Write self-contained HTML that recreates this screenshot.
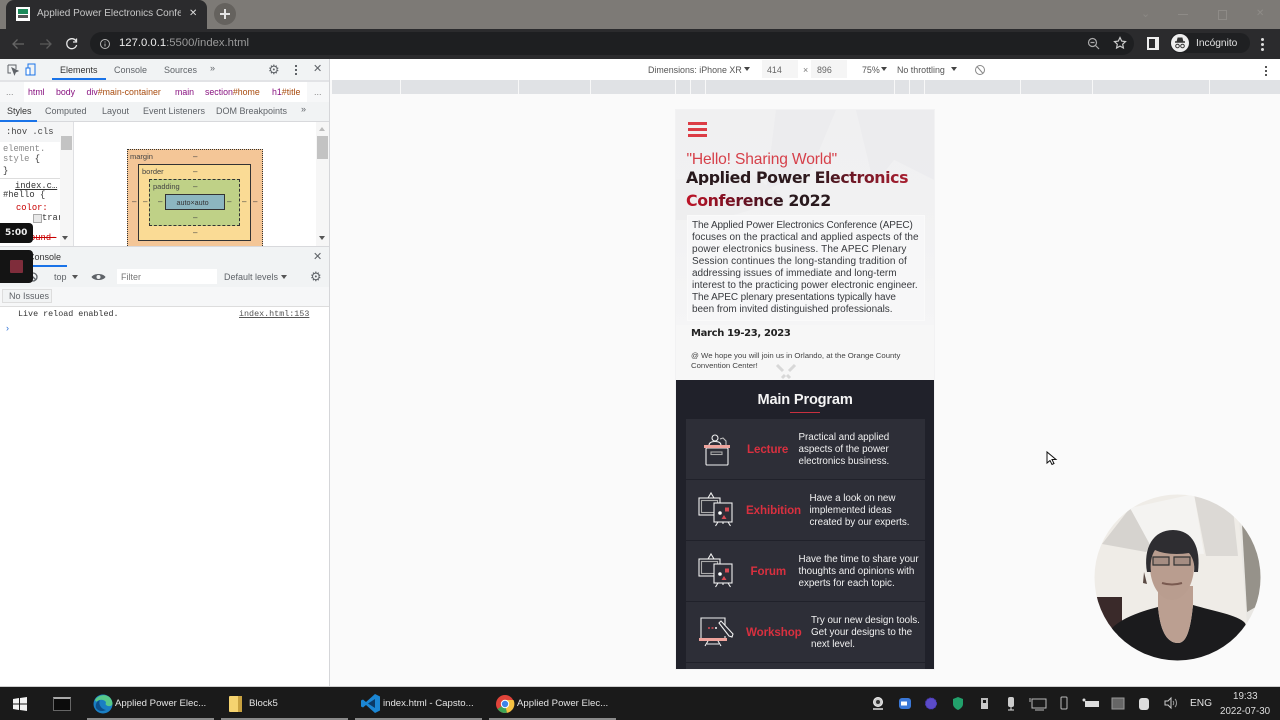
<!DOCTYPE html>
<html lang="en"><head><meta charset="utf-8"><title>Applied Power Electronics Conference</title>
<style>
html,body{margin:0;padding:0;width:1280px;height:720px;overflow:hidden;background:#fafafa;font-family:"Liberation Sans",sans-serif}
.a,.t{position:absolute}
.t{white-space:nowrap;line-height:1}
.m{font-family:"Liberation Mono",monospace}
.b{color:#5f6368;font-size:9px}
.w{color:#f1f1f1;font-size:9.850px;line-height:12px;letter-spacing:-.03px}
.r{color:#d8303f;font-size:11.600px;font-weight:bold;letter-spacing:-.1px}
.p{color:#383a3e;font-size:10px}
svg{position:absolute;overflow:visible}
</style></head><body>

<!-- browser chrome -->
<div class="a" style="left:0;top:0;width:1280px;height:29px;background:#7d7a76"></div>
<div class="a" style="left:6px;top:0;width:201px;height:29px;background:#2b2b2d;border-radius:8px 8px 0 0"></div>
<div class="a" style="left:16px;top:7px;width:14px;height:14px;background:#fff"></div>
<div class="a" style="left:18px;top:9px;width:10px;height:5px;background:#1c8a5a"></div>
<div class="a" style="left:18px;top:15px;width:10px;height:3px;background:#555"></div>
<div class="t" style="left:37px;top:8.500px;font-size:10px;color:#c8c8c8;width:144px;overflow:hidden">Applied Power Electronics Confere</div>
<div class="t" style="left:189px;top:8.500px;font-size:10px;color:#ddd">✕</div>
<div class="a" style="left:214px;top:3px;width:22px;height:22px;border-radius:50%;background:#65625e"></div>
<div class="a" style="left:220px;top:13px;width:10px;height:2px;background:#e4e4e4"></div>
<div class="a" style="left:224px;top:9px;width:2px;height:10px;background:#e4e4e4"></div>
<div class="a" style="left:0;top:29px;width:1280px;height:30px;background:#2b2b2d"></div>
<div class="a" style="left:90px;top:32px;width:1044px;height:23px;border-radius:12px;background:#1e1f21"></div>
<svg style="left:0;top:29px" width="90" height="30" fill="none" stroke-width="1.300">
<path d="M24 15H13M17.500 10.500L13 15l4.500 4.500" stroke="#666"/>
<path d="M40 15h11M46.500 10.500L51 15l-4.500 4.500" stroke="#5a5a5a"/>
<path d="M76 12a5 5 0 1 0 .6 4M76.500 9.500v3.500h-3.500" stroke="#e8e8e8"/>
</svg>
<svg style="left:98px;top:37px" width="14" height="14" fill="none" stroke="#b8b8b8"><circle cx="7" cy="7" r="4.500"/><path d="M7 6.500v3M7 4.500v1"/></svg>
<div class="t" style="left:119px;top:37.500px;font-size:11.300px;color:#9a9a9a"><span style="color:#ededed">127.0.0.1</span>:5500/index.html</div>
<svg style="left:1086px;top:36px" width="16" height="16" fill="none" stroke="#aaa" stroke-width="1.200"><circle cx="6.500" cy="6.500" r="4"/><path d="M9.500 9.500l3.500 3.500M4.500 6.500h4"/></svg>
<svg style="left:1113px;top:36px" width="14" height="14" fill="none" stroke="#ccc" stroke-width="1.200"><path d="M7 1.500l1.700 3.600 3.800.5-2.800 2.600.7 3.800L7 10.100l-3.400 1.900.7-3.800L1.500 5.600l3.800-.5z"/></svg>
<div class="a" style="left:1147px;top:37px;width:6px;height:9px;border:2px solid #eee;border-right-width:4px"></div>
<div class="a" style="left:1170px;top:33px;width:80px;height:20px;border-radius:10px;background:#1f2022"></div>
<div class="a" style="left:1171px;top:34px;width:18px;height:18px;border-radius:50%;background:#eee"></div>
<svg style="left:1171px;top:34px" width="18" height="18" fill="none" stroke="#333"><path d="M4 8h10" stroke-width="1.500"/><path d="M6 8l1-4h4l1 4z" fill="#333"/><circle cx="6.500" cy="12" r="1.800"/><circle cx="11.500" cy="12" r="1.800"/></svg>
<div class="t" style="left:1196px;top:38.500px;font-size:10.200px;color:#e2e2e2">Incógnito</div>
<div class="a" style="left:1261px;top:38px;width:3px;height:3px;background:#ddd;box-shadow:0 5px #ddd,0 10px #ddd;border-radius:50%"></div>
<div class="t" style="left:1141px;top:9px;font-size:11px;color:#8c8985">⌄</div>
<div class="a" style="left:1178px;top:14px;width:10px;height:1px;background:#8e8b87"></div>
<div class="a" style="left:1218px;top:10px;width:7px;height:8px;border:1px solid #8e8b87"></div>
<div class="t" style="left:1256px;top:9px;font-size:10px;color:#8e8b87">✕</div>
<div class="a" style="left:0;top:59px;width:1280px;height:21px;background:#fff"></div>

<!-- devtools -->
<div class="a" style="left:0;top:59px;width:329px;height:628px;background:#fff;border-right:1px solid #d5d6d9"></div>
<div class="a" style="left:0;top:59px;width:329px;height:21px;background:#f1f3f4"></div>
<svg style="left:6px;top:63px" width="34" height="14" fill="none" stroke="#5f6368"><path d="M2 2h8v4M2 2v8h3"/><path d="M6 5l6 3-2.500 1-1 2.500z" fill="#5f6368"/><rect x="22" y="1" width="7" height="11" stroke="#1a73e8"/><rect x="20" y="5" width="4" height="7" fill="#fff" stroke="#1a73e8"/></svg>
<div class="t b" style="left:60px;top:66px;color:#333">Elements</div>
<div class="a" style="left:52px;top:78px;width:54px;height:2px;background:#1a73e8"></div>
<div class="t b" style="left:114px;top:66px">Console</div>
<div class="t b" style="left:164px;top:66px">Sources</div>
<div class="t b" style="left:210px;top:64px">»</div>
<div class="t" style="left:268px;top:63px;font-size:13px;color:#5f6368">⚙</div>
<div class="a" style="left:295px;top:65px;width:2px;height:2px;background:#5f6368;box-shadow:0 4px #5f6368,0 8px #5f6368"></div>
<div class="t" style="left:313px;top:64px;font-size:11px;color:#5f6368">✕</div>
<div class="a" style="left:0;top:80px;width:329px;height:2px;background:#e2e3e6"></div>
<div class="a" style="left:0;top:82px;width:329px;height:20px;background:#f6f7f8"></div>
<div class="a" style="left:24px;top:82px;width:283px;height:20px;background:#fff"></div>
<div class="t" style="left:6px;top:88px;font-size:9px;color:#888">...</div>
<div class="t" style="left:28px;top:87.500px;font-size:8.800px;color:#881280">html</div>
<div class="t" style="left:56px;top:87.500px;font-size:8.800px;color:#881280">body</div>
<div class="t" style="left:86.500px;top:87.500px;font-size:8.800px;color:#881280">div<span style="color:#a84b0e">#main-container</span></div>
<div class="t" style="left:175px;top:87.500px;font-size:8.800px;color:#881280">main</div>
<div class="t" style="left:205px;top:87.500px;font-size:8.800px;color:#881280">section<span style="color:#a84b0e">#home</span></div>
<div class="t" style="left:272px;top:87.500px;font-size:8.800px;color:#881280">h1<span style="color:#a84b0e">#title</span></div>
<div class="t" style="left:314px;top:88px;font-size:9px;color:#888">...</div>
<div class="a" style="left:0;top:102px;width:329px;height:20px;background:#f1f3f4;border-bottom:1px solid #d8d9dc;box-sizing:border-box"></div>
<div class="t b" style="left:7px;top:107px;color:#333">Styles</div>
<div class="a" style="left:0;top:120px;width:37px;height:2px;background:#1a73e8"></div>
<div class="t b" style="left:45px;top:107px">Computed</div>
<div class="t b" style="left:102px;top:107px">Layout</div>
<div class="t b" style="left:143px;top:107px">Event Listeners</div>
<div class="t b" style="left:216px;top:107px">DOM Breakpoints</div>
<div class="t b" style="left:301px;top:105px">»</div>

<!-- styles pane -->
<div class="a" style="left:0;top:122px;width:73px;height:124px;background:#fff;border-right:1px solid #dfe0e3;overflow:hidden">
<div class="a" style="left:0;top:0;width:60px;height:20px;background:#f4f5f6"></div>
<div class="t m" style="left:6px;top:6px;font-size:8.800px;color:#444">:hov .cls</div>
<div class="t m" style="left:3px;top:23px;font-size:8.800px;color:#888">element.</div>
<div class="t m" style="left:3px;top:33px;font-size:8.800px;color:#888">style <span style="color:#333">{</span></div>
<div class="t m" style="left:3px;top:45px;font-size:8.800px;color:#333">}</div>
<div class="a" style="left:0;top:56px;width:60px;height:1px;background:#ddd"></div>
<div class="t m" style="left:15px;top:60px;font-size:8.800px;color:#333;text-decoration:underline">index.c…</div>
<div class="t m" style="left:3px;top:69px;font-size:8.800px;color:#333">#hello {</div>
<div class="t m" style="left:16px;top:82px;font-size:8.800px;color:#c80000">color:</div>
<div class="a" style="left:33px;top:92px;width:7px;height:7px;border:1px solid #aaa;background:#e8e8e8"></div>
<div class="t m" style="left:42px;top:92px;font-size:8.800px;color:#333">trar</div>
<div class="t m" style="left:30px;top:112px;font-size:8.800px;color:#c80000;text-decoration:line-through">ound-</div>
<div class="a" style="left:60px;top:0;width:13px;height:124px;background:#f6f6f6"></div>
<div class="a" style="left:61px;top:14px;width:11px;height:14px;background:#c3c3c3"></div>
</div>
<div class="a" style="left:316px;top:122px;width:13px;height:124px;background:#f6f6f6"></div>
<div class="a" style="left:317px;top:136px;width:11px;height:23px;background:#c3c3c3"></div>
<div class="a" style="left:319px;top:127px;border:3px solid transparent;border-bottom:4px solid #bbb;border-top:0"></div>
<div class="a" style="left:319px;top:236px;border:3px solid transparent;border-top:4px solid #555;border-bottom:0"></div>
<div class="a" style="left:62px;top:236px;border:3px solid transparent;border-top:4px solid #555;border-bottom:0"></div>

<!-- box model -->
<div class="a" style="left:127px;top:149px;width:134px;height:96px;background:#f4c697;border:1px dotted #333;border-bottom:0"></div>
<div class="a" style="left:138px;top:164px;width:111px;height:75px;background:#fadb95;border:1px solid #333"></div>
<div class="a" style="left:149px;top:179px;width:89px;height:45px;background:#bfd187;border:1px dashed #333"></div>
<div class="a" style="left:165px;top:194px;width:58px;height:14px;background:#8cb6c0;border:1px solid #333"></div>
<div class="t" style="left:130px;top:153px;font-size:7.500px;color:#444">margin</div>
<div class="t" style="left:142px;top:168px;font-size:7.500px;color:#444">border</div>
<div class="t" style="left:153px;top:183px;font-size:7.500px;color:#444">padding</div>
<div class="t" style="left:176.500px;top:199px;font-size:7.200px;color:#333">auto×auto</div>
<div class="t" style="left:193px;top:153px;font-size:8px;color:#444">–</div>
<div class="t" style="left:193px;top:168px;font-size:8px;color:#444">–</div>
<div class="t" style="left:193px;top:183px;font-size:8px;color:#444">–</div>
<div class="t" style="left:193px;top:214px;font-size:8px;color:#444">–</div>
<div class="t" style="left:193px;top:229px;font-size:8px;color:#444">–</div>
<div class="t" style="left:132px;top:198px;font-size:8px;color:#444">–</div>
<div class="t" style="left:143px;top:198px;font-size:8px;color:#444">–</div>
<div class="t" style="left:158px;top:198px;font-size:8px;color:#444">–</div>
<div class="t" style="left:227px;top:198px;font-size:8px;color:#444">–</div>
<div class="t" style="left:242px;top:198px;font-size:8px;color:#444">–</div>
<div class="t" style="left:253px;top:198px;font-size:8px;color:#444">–</div>

<!-- console drawer -->
<div class="a" style="left:0;top:246px;width:329px;height:21px;background:#f1f3f4;border-top:1px solid #d8d9dc;box-sizing:border-box"></div>
<div class="t b" style="left:28px;top:253px;color:#333">Console</div>
<div class="a" style="left:28px;top:265px;width:39px;height:2px;background:#1a73e8"></div>
<div class="t" style="left:313px;top:252px;font-size:11px;color:#5f6368">✕</div>
<div class="a" style="left:0;top:267px;width:329px;height:20px;background:#f1f3f4"></div>
<svg style="left:28px;top:272px" width="10" height="10" fill="none" stroke="#5f6368" stroke-width="1.300"><circle cx="5" cy="5" r="4"/><path d="M2 2l6 6"/></svg>
<div class="t b" style="left:54px;top:273px">top</div>
<div class="a" style="left:72px;top:275px;border:3px solid transparent;border-top:4px solid #555;border-bottom:0"></div>
<svg style="left:91px;top:272px" width="15" height="10" fill="#5f6368"><path d="M0.500 5C3 1 12 1 14.500 5 12 9 3 9 .5 5z"/><circle cx="7.500" cy="5" r="2" fill="#f1f3f4"/></svg>
<div class="a" style="left:117px;top:269px;width:100px;height:15px;background:#fff"></div>
<div class="t b" style="left:121px;top:273px;color:#777">Filter</div>
<div class="t b" style="left:224px;top:273px">Default levels</div>
<div class="a" style="left:281px;top:275px;border:3px solid transparent;border-top:4px solid #555;border-bottom:0"></div>
<div class="t" style="left:310px;top:270px;font-size:13px;color:#5f6368">⚙</div>
<div class="a" style="left:0;top:287px;width:329px;height:20px;background:#f6f7f8;border-bottom:1px solid #ddd;box-sizing:border-box"></div>
<div class="a" style="left:2px;top:289px;width:50px;height:14px;background:#f1f3f4;border:1px solid #ddd;box-sizing:border-box"></div>
<div class="t b" style="left:9px;top:292px">No Issues</div>
<div class="t m" style="left:18px;top:310px;font-size:8.400px;color:#333">Live reload enabled.</div>
<div class="t m" style="left:239px;top:310px;font-size:8.400px;color:#555;text-decoration:underline">index.html:153</div>
<div class="t" style="left:6px;top:324px;font-size:9px;color:#2a6fd6">›</div>

<!-- recorder overlay -->
<div class="a" style="left:0;top:223px;width:33px;height:20px;background:#111;border-radius:0 4px 4px 0"></div>
<div class="t" style="left:5px;top:228.500px;font-size:9px;font-weight:bold;color:#eee;font-family:'DejaVu Sans',sans-serif">5:00</div>
<div class="a" style="left:0;top:250px;width:33px;height:33px;background:#141414;border-radius:0 4px 4px 0"></div>
<div class="a" style="left:10px;top:260px;width:13px;height:13px;background:#7f2d3b;border-radius:1px"></div>

<!-- device toolbar -->
<div class="t" style="left:648px;top:65.500px;font-size:8.900px;color:#555">Dimensions: iPhone XR</div>
<div class="a" style="left:744px;top:67px;border:3px solid transparent;border-top:4px solid #444;border-bottom:0"></div>
<div class="a" style="left:762px;top:60px;width:36px;height:18px;background:#f5f5f5"></div>
<div class="a" style="left:811px;top:60px;width:36px;height:18px;background:#f5f5f5"></div>
<div class="t" style="left:767px;top:65.500px;font-size:8.900px;color:#666">414</div>
<div class="t" style="left:803px;top:65.500px;font-size:8.900px;color:#777">×</div>
<div class="t" style="left:817px;top:65.500px;font-size:8.900px;color:#666">896</div>
<div class="t" style="left:862px;top:65.500px;font-size:8.900px;color:#555">75%</div>
<div class="a" style="left:881px;top:67px;border:3px solid transparent;border-top:4px solid #444;border-bottom:0"></div>
<div class="t" style="left:897px;top:65.500px;font-size:8.900px;color:#555">No throttling</div>
<div class="a" style="left:951px;top:67px;border:3px solid transparent;border-top:4px solid #444;border-bottom:0"></div>
<svg style="left:974px;top:64px" width="12" height="12" fill="none" stroke="#888"><circle cx="6" cy="6" r="4.500"/><path d="M3 2.500l6 7"/></svg>
<div class="a" style="left:1265px;top:66px;width:2px;height:2px;background:#555;box-shadow:0 4px #555,0 8px #555"></div>

<!-- ruler -->
<div class="a" style="left:332px;top:80px;width:948px;height:14px;background:#e0e2e5"></div>
<div class="a" style="left:400px;top:80px;width:1px;height:14px;background:#f8f8f8;box-shadow:118px 0 #f8f8f8,190px 0 #f8f8f8,275px 0 #f8f8f8,290px 0 #f8f8f8,305px 0 #f8f8f8,494px 0 #f8f8f8,509px 0 #f8f8f8,524px 0 #f8f8f8,620px 0 #f8f8f8,692px 0 #f8f8f8,809px 0 #f8f8f8"></div>

<!-- emulated page -->
<div class="a" style="left:675px;top:109px;width:260px;height:561px;background:#f2f2f3"></div>
<div class="a" style="left:676px;top:110px;width:258px;height:270px;background:linear-gradient(180deg,#f0f0f1 0%,#f1f1f2 35%,#f4f4f5 70%,#f7f7f7 100%)"></div>
<svg style="left:676px;top:110px" width="258" height="110" fill="#eaeaec"><path d="M100 0h60l-25 60-45 20zM180 0h78v70l-40-20-20 25z" opacity=".6"/><path d="M0 70l70-10 40 30-70 20H0z" fill="#eeeeef"/></svg>
<div class="a" style="left:687px;top:215px;width:238px;height:106px;background:#f7f7f8;border:1px solid #fafafa;box-sizing:border-box"></div>
<div class="a" style="left:676px;top:325px;width:258px;height:55px;background:#f7f7f7"></div>
<div class="a" style="left:688px;top:122px;width:19px;height:3px;background:#dc3c45;box-shadow:0 6px #dc3c45,0 12px #dc3c45"></div>
<div class="t" style="left:686.500px;top:151.500px;font-size:15.600px;color:#d6404a;letter-spacing:-.15px">"Hello! Sharing World"</div>
<div class="t" style="left:686px;top:169.500px;font-size:15.800px;font-weight:bold;font-family:'DejaVu Sans',sans-serif;letter-spacing:-.4px;background:linear-gradient(90deg,#26181b 0%,#2e1a1e 58%,#6e1826 75%,#a81e30 100%);-webkit-background-clip:text;background-clip:text;color:transparent">Applied Power Electronics</div>
<div class="t" style="left:686px;top:192.500px;font-size:15.800px;font-weight:bold;font-family:'DejaVu Sans',sans-serif;letter-spacing:-.38px;background:linear-gradient(90deg,#bf1428 0%,#5c1020 45%,#2a1a1e 70%,#2a1a1e 100%);-webkit-background-clip:text;background-clip:text;color:transparent">Conference 2022</div>
<div class="t p" style="left:692px;top:221px;letter-spacing:-.13px">The Applied Power Electronics Conference (APEC)</div>
<div class="t p" style="left:692px;top:233px;letter-spacing:.04px">focuses on the practical and applied aspects of the</div>
<div class="t p" style="left:692px;top:245px;letter-spacing:.13px">power electronics business. The APEC Plenary</div>
<div class="t p" style="left:692px;top:257px;letter-spacing:.1px">Session continues the long-standing tradition of</div>
<div class="t p" style="left:692px;top:269px">addressing issues of immediate and long-term</div>
<div class="t p" style="left:692px;top:281px">interest to the practicing power electronic engineer.</div>
<div class="t p" style="left:692px;top:293px;letter-spacing:-.09px">The APEC plenary presentations typically have</div>
<div class="t p" style="left:692px;top:305px;letter-spacing:-.04px">been from invited distinguished professionals.</div>
<div class="t" style="left:691px;top:329px;font-size:10px;font-weight:bold;color:#222;font-family:'DejaVu Sans',sans-serif;letter-spacing:-.34px">March 19-23, 2023</div>
<div class="t" style="left:691px;top:352px;font-size:7.750px;color:#444">@ We hope you will join us in Orlando, at the Orange County</div>
<div class="t" style="left:691px;top:362px;font-size:7.750px;color:#444">Convention Center!</div>
<svg style="left:775px;top:364px" width="22" height="16" stroke="#d8d8d8" stroke-width="3" fill="none"><path d="M2 1l6 6M20 1l-6 6M7 14l3-3M15 14l-3-3"/></svg>

<!-- main program -->
<div class="a" style="left:676px;top:380px;width:258px;height:289px;background:#20212a"></div>
<div class="t" style="left:757.500px;top:393px;font-size:14.600px;font-weight:bold;color:#f4f4f4;letter-spacing:-.18px">Main Program</div>
<div class="a" style="left:790px;top:412px;width:30px;height:1px;background:#c9303f"></div>
<div class="a" style="left:686px;top:419px;width:239px;height:60px;background:#2d2e37"></div>
<div class="a" style="left:686px;top:480px;width:239px;height:60px;background:#2d2e37"></div>
<div class="a" style="left:686px;top:541px;width:239px;height:60px;background:#2d2e37"></div>
<div class="a" style="left:686px;top:602px;width:239px;height:60px;background:#2d2e37"></div>
<div class="a" style="left:686px;top:663px;width:239px;height:6px;background:#2d2e37"></div>

<!-- icons -->
<svg style="left:703px;top:433px" width="28" height="33" fill="none" stroke="#f0f0f0" stroke-width="1.100">
<circle cx="12" cy="5" r="3"/><path d="M6 12.500c0-3 3-4 6-4s6 1 6 4"/><path d="M17 6l3-1 3 3v4" stroke="#bbb"/>
<rect x="3" y="15" width="22" height="17" rx="1"/><rect x="8" y="19" width="11" height="2.500" stroke="#aaa"/>
<rect x="1" y="12" width="26" height="3" fill="#eea49d" stroke="none"/></svg>
<svg style="left:698px;top:492px" width="36" height="34" fill="none" stroke="#f0f0f0" stroke-width="1.100">
<path d="M10 6l3-5 3 5"/><rect x="1" y="6" width="21" height="17"/><rect x="3.500" y="8.500" width="16" height="12" stroke="#aaa"/>
<rect x="16" y="11" width="18" height="19" fill="#2d2e37"/><path d="M20 30l-2.500 4M30 30l2.500 4M25 30v2"/>
<circle cx="22" cy="21" r="1.800" fill="#fff" stroke="none"/><rect x="27" y="15.500" width="4" height="4" fill="#d84b55" stroke="none"/><path d="M23.500 27l2.500-4 2.500 4z" fill="#d84b55" stroke="none"/></svg>
<svg style="left:698px;top:553px" width="36" height="34" fill="none" stroke="#f0f0f0" stroke-width="1.100">
<path d="M10 6l3-5 3 5"/><rect x="1" y="6" width="21" height="17"/><rect x="3.500" y="8.500" width="16" height="12" stroke="#aaa"/>
<rect x="16" y="11" width="18" height="19" fill="#2d2e37"/><path d="M20 30l-2.500 4M30 30l2.500 4M25 30v2"/>
<circle cx="22" cy="21" r="1.800" fill="#fff" stroke="none"/><rect x="27" y="15.500" width="4" height="4" fill="#d84b55" stroke="none"/><path d="M23.500 27l2.500-4 2.500 4z" fill="#d84b55" stroke="none"/></svg>
<svg style="left:699px;top:616px" width="36" height="32" fill="none" stroke="#f0f0f0" stroke-width="1.100">
<path d="M2 22V2h24v7M26 20v2"/><rect x="0" y="22" width="28" height="3" fill="#eea49d" stroke="none"/><path d="M9 25l-3 5M19 25l3 5M8 28h12"/>
<path d="M20 7l2-2 12 13-1 3-3-1z" fill="#2d2e37"/><path d="M9 12h2M12.500 12h2" stroke="#d84b55" stroke-width="1.500"/><path d="M16 12h2" stroke="#fff" stroke-width="1.500"/></svg>

<div class="t r" style="left:747px;top:444px">Lecture</div>
<div class="t r" style="left:746px;top:505px">Exhibition</div>
<div class="t r" style="left:750.500px;top:566px">Forum</div>
<div class="t r" style="left:746px;top:627px">Workshop</div>

<div class="t w" style="left:798.500px;top:432px">Practical and applied<br>aspects of the power<br>electronics business.</div>
<div class="t w" style="left:809.500px;top:493px">Have a look on new<br>implemented ideas<br>created by our experts.</div>
<div class="t w" style="left:798.500px;top:554px">Have the time to share your<br>thoughts and opinions with<br>experts for each topic.</div>
<div class="t w" style="left:811px;top:615px">Try our new design tools.<br>Get your designs to the<br>next level.</div>

<!-- cursor -->
<svg style="left:1046px;top:451px" width="10" height="15"><path d="M1 1v11l3-2.500 2 4 2-1-2-4h4z" fill="#fff" stroke="#111"/></svg>

<!-- webcam bubble -->
<svg style="left:1094px;top:494px" width="167" height="167" viewBox="0 0 167 167">
<defs><clipPath id="c"><circle cx="83.500" cy="83.500" r="83"/></clipPath></defs>
<g clip-path="url(#c)">
<rect width="167" height="167" fill="#efece7"/>
<path d="M8 50L36 14 58 50 52 58z" fill="#d6d3cf"/>
<path d="M36 14L100 0l10 60-50-2z" fill="#f4f3f1"/>
<path d="M100 0h18l20 6 6 56h-32z" fill="#dcd9d5"/>
<path d="M144 12l8 2 15 30v76l-14 10z" fill="#e9e7e3"/>
<path d="M148 30l19 30v50l-14 8z" fill="#96928a"/>
<path d="M0 103h28v30l-12 12H0z" fill="#3a2a2a"/>
<path d="M0 167l18-33c10-10 30-17 46-21C66 135 72 149 84 149 94 149 97 130 99 111c20 6 45 10 52 18l16 38z" fill="#1b1b1d"/>
<path d="M64 92v21C66 135 72 149 84 149 94 149 97 130 99 111V92z" fill="#bb9f91"/>
<ellipse cx="78" cy="72" rx="22" ry="34" fill="#b99d8f"/>
<path d="M53 78c-4-24 6-42 26-42s28 18 25 42l-4 0c1-8-1-14-5-19-12 2-26 1-34-3-4 6-5 14-4 22z" fill="#2e2d31"/>
<path d="M59 63h16v8H59zM80 63h16v8H80z" fill="#a58d82" stroke="#333" stroke-width="1.200"/>
<path d="M68 89q10 3 20 0" stroke="#7a5a50" stroke-width="2" fill="none"/>
<path d="M50 78l3 12-4-1z" fill="#5a4a44"/>
</g></svg>

<!-- taskbar -->
<div class="a" style="left:0;top:686px;width:1280px;height:1px;background:#cfcfcf"></div>
<div class="a" style="left:0;top:687px;width:1280px;height:33px;background:#1a1a1a"></div>
<div class="a" style="left:87px;top:718px;width:127px;height:2px;background:#8a8a8a;box-shadow:134px 0 #8a8a8a,268px 0 #8a8a8a,402px 0 #8a8a8a"></div>
<svg style="left:13px;top:697px" width="14" height="14" fill="#f2f2f2"><path d="M0 2l6-1v5.500H0zM7 1l7-1v6.500H7zM0 7.500h6V13l-6-1zM7 7.500h7V14l-7-1z"/></svg>
<div class="a" style="left:53px;top:697px;width:18px;height:14px;background:#0c0c0c;border:1px solid #666;border-top:2px solid #aaa;box-sizing:border-box"></div>
<svg style="left:93px;top:694px" width="20" height="20"><circle cx="10" cy="10" r="9.500" fill="#1a7fc4"/><path d="M2 6C6-1 18-1 19.500 9c.5 4-6 4-7 1 2-3-3-5-6-4-3 1-3 3-4.500 0z" fill="#57c98b"/><path d="M3 14c-1-4 1-7 4-8-2 4 1 9 6 10-4 2-8 1-10-2z" fill="#0d4f8b"/></svg>
<div class="t" style="left:115px;top:699px;font-size:9.600px;color:#e4e4e4">Applied Power Elec...</div>
<svg style="left:229px;top:696px" width="13" height="16"><rect width="13" height="16" rx="1" fill="#f5d36f"/><rect x="9" width="4" height="16" fill="#c9a240"/></svg>
<div class="t" style="left:249px;top:699px;font-size:9.600px;color:#e4e4e4">Block5</div>
<svg style="left:361px;top:694px" width="19" height="19"><path d="M14 0l5 2.500v14L14 19 5 11 2 13.500 0 12.500v-6L2 5.500 5 8z" fill="#1b86d3"/><path d="M14 5L7 9.500l7 4.500z" fill="#0b3a66"/></svg>
<div class="t" style="left:383px;top:699px;font-size:9.600px;color:#e4e4e4">index.html - Capsto...</div>
<svg style="left:496px;top:695px" width="18" height="18"><circle cx="9" cy="9" r="9" fill="#e0443a"/><path d="M9 9L1.500 14A9 9 0 0 0 11 17.800z" fill="#3da556"/><path d="M9 9l2 8.800A9 9 0 0 0 17.500 5H9z" fill="#f5c242"/><circle cx="9" cy="9" r="4.200" fill="#fff"/><circle cx="9" cy="9" r="3.200" fill="#3f83e8"/></svg>
<div class="t" style="left:517px;top:699px;font-size:9.600px;color:#e4e4e4">Applied Power Elec...</div>

<!-- tray -->
<svg style="left:871px;top:696px" width="280" height="16" fill="none" stroke="#ddd">
<circle cx="7" cy="6" r="4.500" fill="#ccc" stroke="#eee"/><circle cx="7" cy="6" r="2" fill="#333" stroke="none"/><path d="M2 13h10" stroke-width="1.500"/>
<rect x="28" y="2" width="12" height="11" rx="3" fill="#3a78d8" stroke="none"/><rect x="30" y="5.500" width="6" height="4" fill="#fff" stroke="none"/>
<circle cx="60" cy="7.500" r="5.500" fill="#5b4bc8" stroke="#4a3ab8" stroke-dasharray="2 1"/>
<path d="M87 1l5 2v5c0 3-3 5-5 6-2-1-5-3-5-6V3z" fill="#22a06b" stroke="none"/>
<rect x="110" y="7" width="7" height="6" fill="#ccc" stroke="none"/><path d="M111 7V3h5v4" stroke="#bbb" stroke-width="2"/>
<rect x="137" y="1" width="6" height="10" rx="2" fill="#ccc" stroke="none"/><path d="M140 11v3M137 14h6"/>
<rect x="161" y="3" width="14" height="9" stroke="#bbb"/><path d="M164 14h9M159 2v4" stroke="#bbb"/>
<rect x="190" y="1" width="6" height="12" rx="1" stroke="#bbb"/>
<rect x="214" y="5" width="14" height="6" fill="#ddd" stroke="none"/><circle cx="213" cy="4" r="1.500" fill="#ddd" stroke="none"/>
<rect x="241" y="2" width="12" height="11" fill="#666" stroke="#999"/>
<rect x="268" y="2" width="10" height="12" rx="3" fill="#ddd" stroke="none"/>
</svg>
<svg style="left:1164px;top:696px" width="14" height="14" fill="none" stroke="#ccc"><path d="M1 5h3l3-3v10L4 9H1z"/><path d="M9 5c1 1 1 3 0 4M11 3c2 2 2 6 0 8" stroke="#999"/></svg>
<div class="t" style="left:1190px;top:698.500px;font-size:10.200px;color:#e2e2e2">ENG</div>
<div class="t" style="left:1233px;top:691.500px;font-size:9.800px;color:#dedede">19:33</div>
<div class="t" style="left:1220px;top:706.500px;font-size:9.800px;color:#dedede">2022-07-30</div>
</body></html>
